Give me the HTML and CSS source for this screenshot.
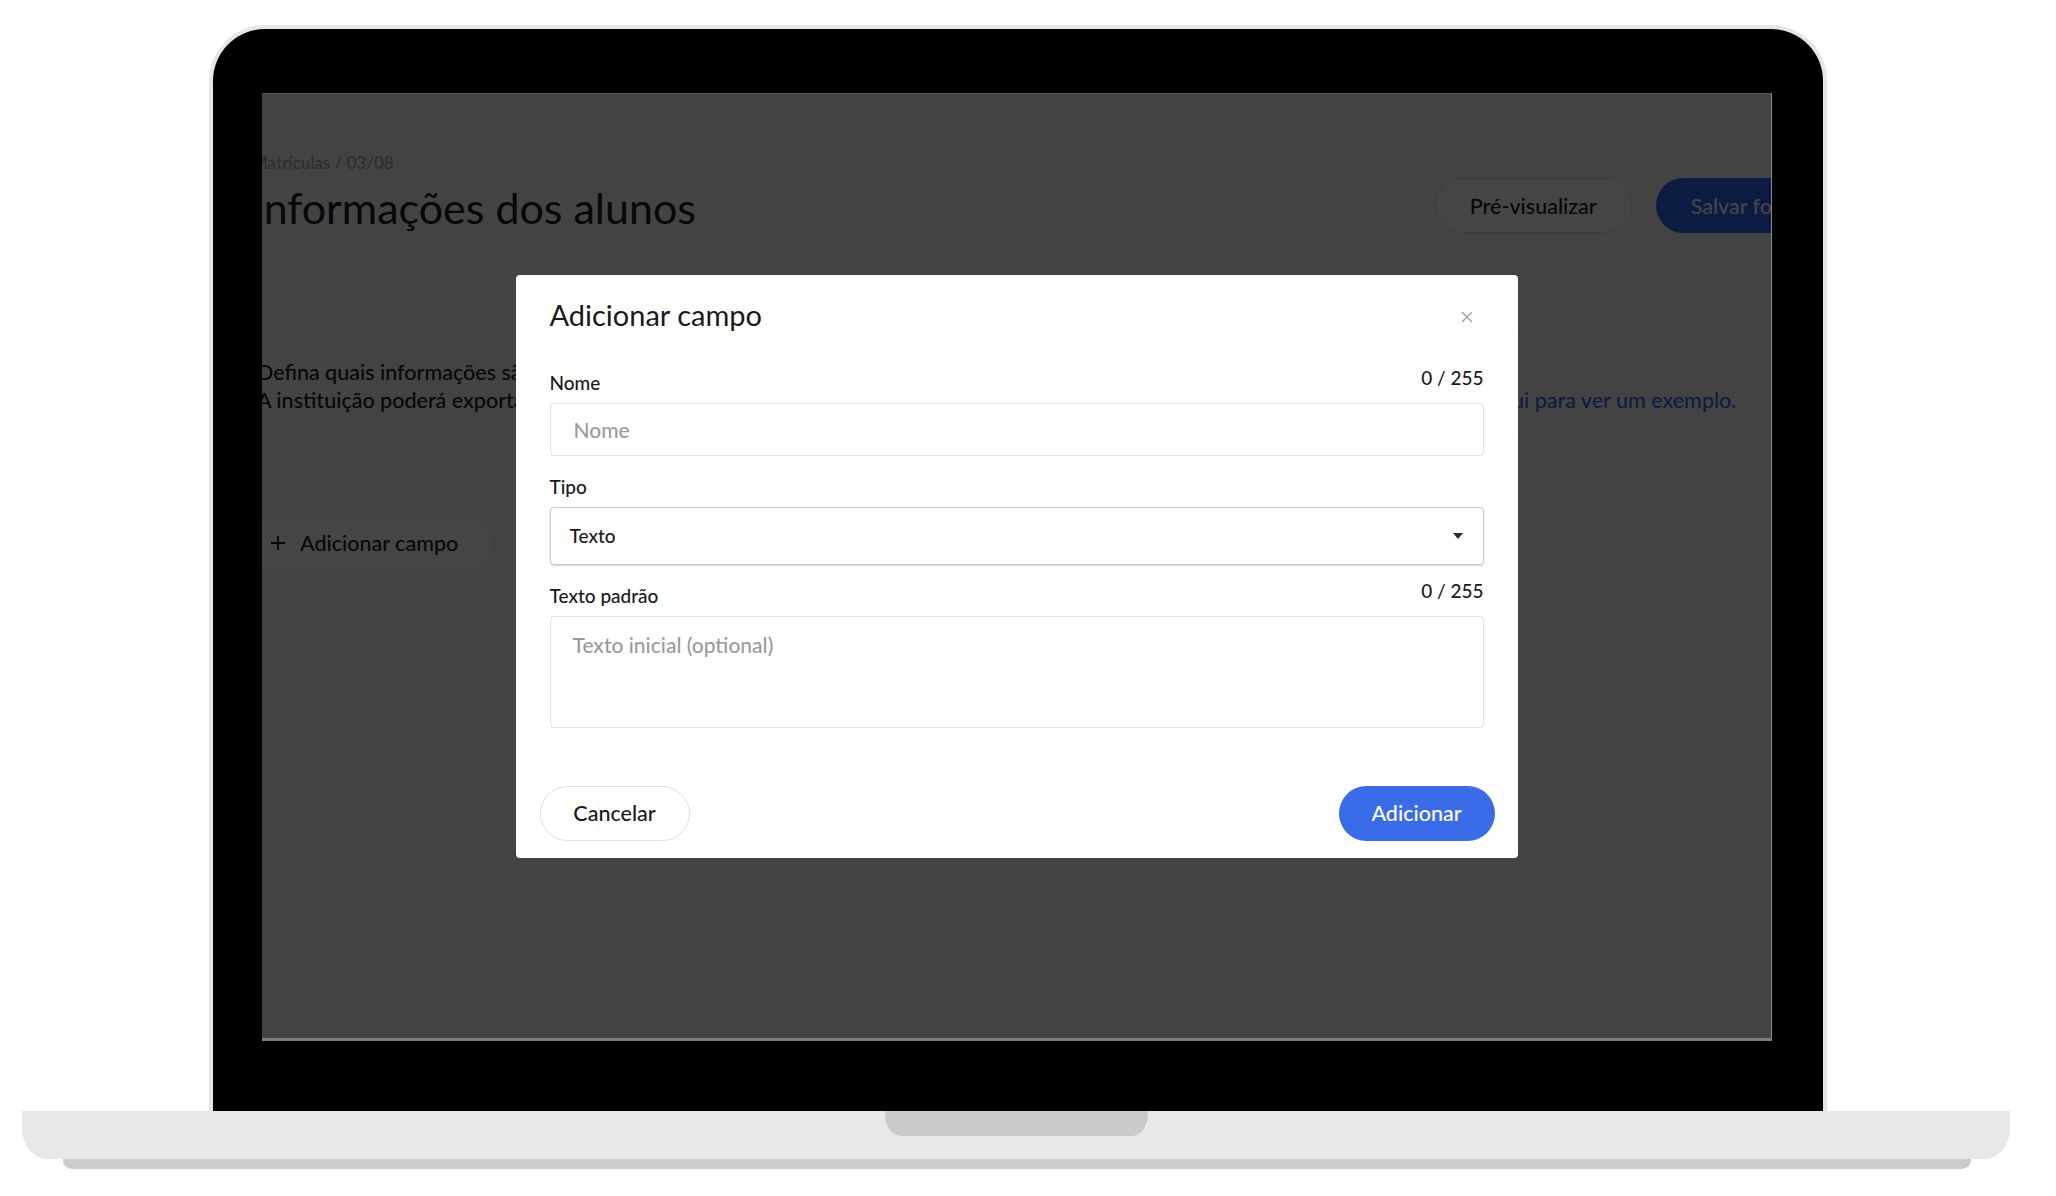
FILE: index.html
```html
<!DOCTYPE html>
<html lang="pt-BR">
<head>
    <meta charset="UTF-8">
    <meta name="viewport" content="width=device-width, initial-scale=1.0">
    <title>Adicionar campo</title>
    <link rel="stylesheet" href="styles.css">
</head>
<body>
<div class="device">
    <div class="lid">
        <div class="screen">
            <div class="page">
                <header class="page-header">
                    <div>
                        <p class="crumbs">Matrículas / 03/08</p>
                        <h1>Informações dos alunos</h1>
                    </div>
                    <div class="header-actions">
                        <button class="btn-outline">Pré-visualizar</button>
                        <button class="btn-primary">Salvar formulário</button>
                    </div>
                </header>
                <div class="tabs"></div>
                <div class="intro">
                    <p>Defina quais informações são necessárias no momento da matrícula dos alunos.</p>
                    <p>A instituição poderá exportar todas essas informações em uma planilha a qualquer momento, mesmo depois das matrículas. <a href="#">Clique aqui para ver um exemplo.</a></p>
                </div>
                <button class="add-field">
                    <svg width="14" height="14" viewBox="0 0 14 14"><path d="M7 0v14M0 7h14" stroke="#1a1a1a" stroke-width="1.8"/></svg>
                    Adicionar campo
                </button>
            </div>

            <!-- modal -->
            <div class="overlay">
                <form class="modal">
                    <div class="modal-head">
                        <h2>Adicionar campo</h2>
                        <button type="button" class="close">
                            <svg width="14" height="14" viewBox="0 0 14 14"><path d="M2 2l10 10M12 2L2 12" stroke="#a3a3a3" stroke-width="1.5"/></svg>
                        </button>
                    </div>

                    <div class="field first">
                        <div class="field-top">
                            <label for="nome">Nome</label>
                            <span class="count">0 / 255</span>
                        </div>
                        <input class="text-input" id="nome" type="text" placeholder="Nome">
                    </div>

                    <div class="field">
                        <div class="field-top">
                            <label>Tipo</label>
                        </div>
                        <div class="select">
                            <span>Texto</span>
                            <svg width="10" height="6" viewBox="0 0 10 6"><path d="M0 0h10L5 6z" fill="#2b2b2b"/></svg>
                        </div>
                    </div>

                    <div class="field">
                        <div class="field-top">
                            <label for="padrao">Texto padrão</label>
                            <span class="count">0 / 255</span>
                        </div>
                        <textarea class="text-area" id="padrao" placeholder="Texto inicial (optional)"></textarea>
                    </div>

                    <div class="modal-foot">
                        <button type="button" class="btn-cancel">Cancelar</button>
                        <button type="submit" class="btn-add">Adicionar</button>
                    </div>
                </form>
            </div>
        </div>
    </div>
    <div class="base"><div class="notch"></div></div>
    <div class="foot"></div>
</div>
</body>
</html>
```

FILE: styles.css
```css
* {
    box-sizing: border-box;
}

body {
    margin: 0;
    background: #fff;
    font-family: Lato, "Liberation Sans", sans-serif;
    font-weight: 500;
}

/* laptop frame */
.device {
    width: 1988px;
    margin-left: 22px;
    padding-top: 25px;
}

.lid {
    width: 1618px;
    margin-left: 187px;
    padding: 64px 51px 70px 49px;
    background: #000;
    border: 4px solid #e6e6e6;
    border-bottom: 0;
    border-radius: 56px 56px 0 0;
}

.base {
    display: flex;
    justify-content: center;
    height: 48px;
    background: #e8e8e8;
    border-radius: 0 0 26px 26px / 0 0 30px 30px;
}

.notch {
    width: 263px;
    height: 25px;
    background: #cbcbcb;
    border-radius: 0 0 16px 16px / 0 0 22px 22px;
}

.foot {
    height: 10px;
    margin: 0 39px 0 41px;
    background: #cccccc;
    border-radius: 0 0 10px 10px / 0 0 8px 8px;
}

.screen {
    position: relative;
    width: 1510px;
    height: 948px;
    overflow: hidden;
    background: #f6f6f6;
    border-top: 1px solid #555;
    border-right: 1px solid #8c8c8c;
    border-bottom: 3px solid #7d7d7d;
}

/* page behind the modal */
.page {
    width: 1634px;
    margin-left: -10px;
    color: #1a1a1a;
}

.page-header {
    display: flex;
    align-items: flex-end;
    justify-content: space-between;
    padding: 58px 0 41px;
    border-bottom: 1px solid #e2e2e2;
}

.crumbs {
    margin: 0 0 9px;
    font-size: 17px;
    line-height: 21px;
    color: #a8a8a8;
}

h1 {
    margin: 0;
    font-size: 43px;
    line-height: 52px;
    font-weight: 400;
}

.header-actions {
    display: flex;
    gap: 24px;
    margin-bottom: 1px;
}

.btn-outline {
    height: 55px;
    padding: 0 34px;
    border: 1px solid #dedede;
    border-radius: 28px;
    background: #fff;
    font: inherit;
    font-size: 21.5px;
    color: #1a1a1a;
}

.btn-primary {
    height: 55px;
    padding: 0 35px;
    border: 0;
    border-radius: 28px;
    background: #2f63f0;
    font: inherit;
    font-size: 21.5px;
    color: #fff;
}

.tabs {
    height: 58px;
    border-bottom: 1px solid #e2e2e2;
}

.intro {
    padding: 24px 0 23px 5px;
    border-bottom: 1px solid #e2e2e2;
    font-size: 21.5px;
    line-height: 28px;
}

.intro p {
    margin: 0;
    white-space: nowrap;
}

.intro a {
    color: #3468f2;
    text-decoration: none;
}

.add-field {
    display: flex;
    align-items: center;
    gap: 15px;
    height: 55px;
    margin-top: 77px;
    padding: 0 34px 0 19px;
    border: 0;
    border-radius: 28px;
    background: #fff;
    font: inherit;
    font-size: 21.5px;
    color: #1a1a1a;
}

/* modal */
.overlay {
    position: absolute;
    inset: 0;
    display: flex;
    align-items: center;
    justify-content: center;
    background: rgba(0, 0, 0, 0.728);
}

.modal {
    width: 1002px;
    padding: 22px 0 17px;
    background: #fff;
    border-radius: 4px;
    color: #1a1a1a;
}

.modal-head {
    display: flex;
    align-items: center;
    justify-content: space-between;
    padding: 0 34px;
}

.modal-head h2 {
    margin: 0;
    font-size: 29px;
    line-height: 36px;
    font-weight: 400;
}

.close {
    display: flex;
    margin: 4px 10px 0 0;
    padding: 0;
    border: 0;
    background: none;
}

.field {
    margin-top: 14px;
    padding: 0 34px;
}

.field.first {
    margin-top: 33px;
}

.field-top {
    display: flex;
    align-items: flex-start;
    justify-content: space-between;
    margin-bottom: 8px;
}

.field-top label {
    padding-top: 5px;
    font-size: 19px;
    line-height: 24px;
}

.count {
    font-size: 19px;
    line-height: 24px;
}

.text-input {
    display: block;
    width: 100%;
    height: 53px;
    padding: 0 23px;
    border: 1px solid #e2e2e2;
    border-radius: 4px;
    font: inherit;
    font-size: 21px;
    color: #1a1a1a;
    outline: none;
}

.text-area {
    display: block;
    width: 100%;
    height: 112px;
    padding: 15px 22px;
    border: 1px solid #e2e2e2;
    border-radius: 4px;
    font: inherit;
    font-size: 21px;
    line-height: 26px;
    resize: none;
    outline: none;
}

.text-input::placeholder,
.text-area::placeholder {
    color: #9b9b9b;
}

.select {
    display: flex;
    align-items: center;
    justify-content: space-between;
    height: 58px;
    padding: 0 20px 0 19px;
    border: 1px solid #c8c8c8;
    border-radius: 4px;
    box-shadow: 0 1px 2px rgba(0, 0, 0, 0.18);
    font-size: 19px;
}

.modal-foot {
    display: flex;
    justify-content: space-between;
    margin-top: 58px;
    padding: 0 23px 0 24px;
}

.btn-cancel {
    width: 150px;
    height: 55px;
    border: 1px solid #e0e0e0;
    border-radius: 28px;
    background: #fff;
    font: inherit;
    font-size: 21.5px;
    color: #1a1a1a;
}

.btn-add {
    width: 156px;
    height: 55px;
    border: 0;
    border-radius: 28px;
    background: #3a6ce9;
    font: inherit;
    font-size: 21.5px;
    color: #fff;
}
```
